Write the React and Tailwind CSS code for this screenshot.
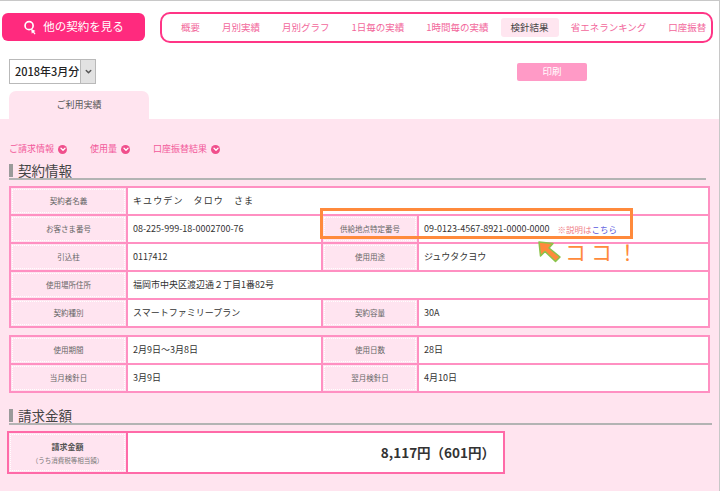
import React from 'react'

const jp = "font-['Noto_Sans_CJK_JP','Noto_Sans',sans-serif]"

const navItems = ['概要', '月別実績', '月別グラフ', '1日毎の実績', '1時間毎の実績', '検針結果', '省エネランキング', '口座振替']

function Chevron({ className }) {
  return (
    <svg viewBox="0 0 10 10" className={className} fill="none" stroke="currentColor" strokeWidth="1.6" strokeLinecap="round" strokeLinejoin="round">
      <path d="M2.5 4 L5 6.5 L7.5 4" />
    </svg>
  )
}

function LinkIcon() {
  return (
    <span className="ml-[4px] flex h-[9px] w-[9px] items-center justify-center rounded-full bg-[#f04f8c] text-white">
      <Chevron className="h-[8px] w-[8px]" />
    </span>
  )
}

function SearchIcon() {
  return (
    <svg viewBox="0 0 16 16" className="h-[15px] w-[15px]" fill="none">
      <circle cx="6.5" cy="6" r="4.3" stroke="white" strokeWidth="1.8" />
      <path d="M8.6 9.2 L9.4 14.6 L10.6 13.2 L12.4 15.4 L13.4 14.6 L11.7 12.4 L13.4 11.8 Z" fill="white" />
    </svg>
  )
}

function Label({ children }) {
  return (
    <div className="flex items-center justify-center bg-[#ffe4f0] text-[7.5px] text-[#666] outline-1 outline-dotted outline-white -outline-offset-2">
      {children}
    </div>
  )
}

function Value({ children, span }) {
  return (
    <div className={`flex items-center bg-white pl-[5px] text-[9px] text-[#333] ${span ? 'col-span-3' : ''}`}>
      {children}
    </div>
  )
}

function Heading({ children, width }) {
  return (
    <div className={`flex h-[16px] items-end border-b-2 border-[#b3b3b3] ${width}`}>
      <span className="mb-[1px] h-[13px] w-[4px] bg-[#9a9a9a]" />
      <span className="ml-[5px] text-[13.5px] leading-[15px] text-[#444]">{children}</span>
    </div>
  )
}

export default function App() {
  return (
    <div className={`h-[491px] w-[720px] overflow-hidden border-t border-r border-[#c8c8c8] bg-white ${jp}`}>
      {/* header */}
      <div className="flex items-start pt-[11px]">
        <button className="ml-[2px] mt-[1px] flex h-[28px] w-[143px] items-center justify-center gap-[5px] rounded-[6px] bg-[#ff2a7e] text-[11.5px] text-white">
          <SearchIcon />
          他の契約を見る
        </button>
        <nav className="ml-[15px] flex h-[31px] w-[553px] items-center gap-[2px] rounded-[10px] border-2 border-[#ff3586] pl-[9px]">
          {navItems.map(item => (
            <span
              key={item}
              className={`whitespace-nowrap rounded-[3px] px-[10px] py-[2px] text-[9.5px] ${item === '検針結果' ? 'bg-[#ffe6f0] text-[#444]' : 'text-[#f2679b]'}`}
            >
              {item}
            </span>
          ))}
        </nav>
      </div>

      {/* month select + print */}
      <div className="mt-[16px] flex items-center">
        <div className="ml-[9px] flex h-[25px] w-[87px] border border-[#b9b9b9] bg-white">
          <span className="flex flex-1 items-center pl-[5px] text-[11px] font-medium text-[#222]">2018年3月分</span>
          <span className="flex w-[15px] items-center justify-center border-l border-[#b9b9b9] bg-[#e2e2e2] text-[#555]">
            <Chevron className="h-[9px] w-[9px]" />
          </span>
        </div>
        <button className="ml-[421px] flex h-[18px] w-[70px] items-center justify-center rounded-[2px] bg-[#ff9ac6] text-[9.5px] text-white">
          印刷
        </button>
      </div>

      {/* tab */}
      <div className="ml-[9px] mt-[7px] flex h-[28px] w-[140px] items-center justify-center rounded-t-[7px] bg-[#ffe4ef] text-[9px] text-[#555]">
        ご利用実績
      </div>

      {/* content */}
      <div className="h-[372px] bg-[#ffe4ef] pl-[9px] pt-[23px]">
        <div className="flex h-[14px] items-center text-[9px] text-[#f2599a]">
          <span className="flex items-center">ご請求情報<LinkIcon /></span>
          <span className="ml-[23px] flex items-center">使用量<LinkIcon /></span>
          <span className="ml-[23px] flex items-center">口座振替結果<LinkIcon /></span>
        </div>

        <div className="mt-[8px]">
          <Heading width="w-[697px]">契約情報</Heading>
        </div>

        <div className="relative mt-[6px] w-[701px]">
          <div className="grid auto-rows-[26px] grid-cols-[115px_193px_94px_1fr] gap-[2px] border-2 border-[#ff90c2] bg-[#ff90c2]">
            <Label>契約者名義</Label>
            <Value span><span className="tracking-[1.1px]">キユウデン　タロウ　さま</span></Value>
            <Label>お客さま番号</Label>
            <Value>08-225-999-18-0002700-76</Value>
            <Label>供給地点特定番号</Label>
            <Value>
              09-0123-4567-8921-0000-0000
              <span className="ml-[8px] text-[8.5px] text-[#f08088]">※説明は</span>
              <span className="text-[8.5px] text-[#5a5ae0]">こちら</span>
            </Value>
            <Label>引込柱</Label>
            <Value>011ｱ412</Value>
            <Label>使用用途</Label>
            <Value>ジュウタクヨウ</Value>
            <Label>使用場所住所</Label>
            <Value span>福岡市中央区渡辺通２丁目1番82号</Value>
            <Label>契約種別</Label>
            <Value>スマートファミリープラン</Value>
            <Label>契約容量</Label>
            <Value>30A</Value>
          </div>

          {/* callout */}
          <div className="absolute left-[311px] top-[22px] h-[31px] w-[313px] border-[3px] border-[#ff8a3c]" />
          <svg viewBox="0 0 24 22" className="absolute left-[529px] top-[55px] h-[22px] w-[24px]">
            <polygon points="1,1 15,2.5 11,7 22,16 17.5,20.5 7,10.5 2.5,15" fill="#ff8a3c" stroke="#8bc34a" strokeWidth="1.5" strokeLinejoin="round" />
          </svg>
          <span className="absolute left-[556px] top-[52px] text-[21px] leading-[26px] tracking-[5px] text-[#ff8a3c]">ココ！</span>
        </div>

        <div className="mt-[7px] grid w-[701px] auto-rows-[26px] grid-cols-[115px_193px_94px_1fr] gap-[2px] border-2 border-[#ff90c2] bg-[#ff90c2]">
          <Label>使用期間</Label>
          <Value>2月9日～3月8日</Value>
          <Label>使用日数</Label>
          <Value>28日</Value>
          <Label>当月検針日</Label>
          <Value>3月9日</Value>
          <Label>翌月検針日</Label>
          <Value>4月10日</Value>
        </div>

        <div className="mt-[16px]">
          <Heading width="w-[703px]">請求金額</Heading>
        </div>

        <div className="-ml-[2px] mt-[6px] flex h-[43px]">
          <div className="flex w-[121px] flex-col items-center justify-center border-2 border-[#ff6aa8] bg-[#ffe4f0] outline-1 outline-dotted outline-white -outline-offset-4">
            <span className="text-[8px] font-bold leading-[12px] text-[#555]">請求金額</span>
            <span className="mt-[3px] text-[6.5px] leading-[9px] text-[#777]">（うち消費税等相当額）</span>
          </div>
          <div className="flex w-[377px] items-center justify-end border-2 border-l-0 border-[#ff6aa8] bg-white pr-[8px] text-[13.5px] font-bold text-[#333]">
            8,117円（601円）
          </div>
        </div>
      </div>
    </div>
  )
}
